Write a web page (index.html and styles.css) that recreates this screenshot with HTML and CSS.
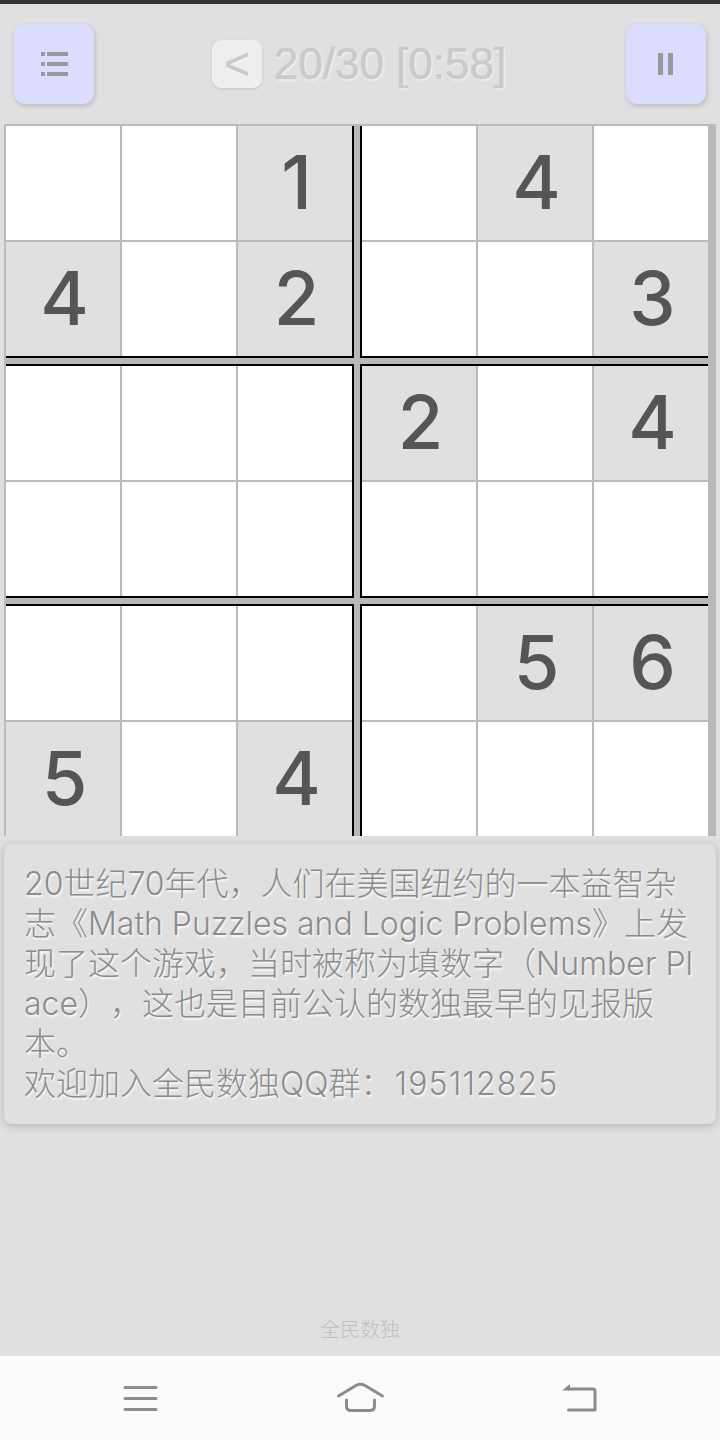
FILE: index.html
```html
<!DOCTYPE html>
<html lang="zh">
<head>
<meta charset="utf-8">
<title>全民数独</title>
<link rel="stylesheet" href="styles.css">
</head>
<body>
<div class="app">
  <header class="top">
    <button class="btn">
      <svg width="27" height="24" viewBox="0 0 27 24"><g fill="#999"><rect x="0" y="0" width="4" height="4"/><rect x="0" y="10" width="4" height="4"/><rect x="0" y="20" width="4" height="4"/><rect x="6" y="0" width="21" height="4"/><rect x="6" y="10" width="21" height="4"/><rect x="6" y="20" width="21" height="4"/></g></svg>
    </button>
    <div class="status"><span class="back">&lt;</span><span class="stat">20/30 [0:58]</span></div>
    <button class="btn">
      <svg width="15" height="22" viewBox="0 0 15 22"><g fill="#999"><rect x="0" y="0" width="5" height="22"/><rect x="10" y="0" width="5" height="22"/></g></svg>
    </button>
  </header>
  <div class="board-wrap">
    <div class="board">
      <div class="block left top-row">
        <div class="cell"></div><div class="cell"></div><div class="cell given">1</div>
        <div class="cell given">4</div><div class="cell"></div><div class="cell given">2</div>
      </div>
      <div class="block right top-row">
        <div class="cell"></div><div class="cell given">4</div><div class="cell"></div>
        <div class="cell"></div><div class="cell"></div><div class="cell given">3</div>
      </div>
      <div class="block left mid-row">
        <div class="cell"></div><div class="cell"></div><div class="cell"></div>
        <div class="cell"></div><div class="cell"></div><div class="cell"></div>
      </div>
      <div class="block right mid-row">
        <div class="cell given">2</div><div class="cell"></div><div class="cell given">4</div>
        <div class="cell"></div><div class="cell"></div><div class="cell"></div>
      </div>
      <div class="block left bottom-row">
        <div class="cell"></div><div class="cell"></div><div class="cell"></div>
        <div class="cell given">5</div><div class="cell"></div><div class="cell given">4</div>
      </div>
      <div class="block right bottom-row">
        <div class="cell"></div><div class="cell given">5</div><div class="cell given">6</div>
        <div class="cell"></div><div class="cell"></div><div class="cell"></div>
      </div>
    </div>
  </div>
  <section class="card">20世纪70年代，人们在美国纽约的一本益智杂志《Math Puzzles and Logic Problems》上发现了这个游戏，当时被称为填数字（Number Place），这也是目前公认的数独最早的见报版本。<br>欢迎加入全民数独QQ群：<span class="qq">195112825</span></section>
  <div class="spacer"></div>
  <div class="brand">全民数独</div>
  <nav class="navbar">
    <svg class="nav-icon" width="720" height="84" viewBox="0 0 720 84"><g stroke="#8c8c8c" stroke-width="3" fill="none" stroke-linecap="round" stroke-linejoin="round"><path d="M125 31.500H156M125 42.500H156M125 53.500H156"/><path d="M338.500 40 356 29.500Q360.500 27 365 29.500L382.500 40"/><path d="M346.500 44V50Q346.500 54.500 351 54.500H370Q374.500 54.500 374.500 50V44"/><path d="M569 33H593Q595 33 595 35V54H568.500"/></g><path d="M570 28V34.500H562Z" fill="#8c8c8c"/></svg>
  </nav>
</div>
</body>
</html>
```
FILE: styles.css
```css
* { box-sizing: border-box; }
html, body { margin: 0; padding: 0; }
body { width: 720px; height: 1440px; background: #e0e0e0; font-family: "Inter", "Noto Sans CJK SC", sans-serif; overflow: hidden; }
.app { height: 1440px; display: flex; flex-direction: column; border-top: 4px solid #333; }
.top { height: 120px; flex: none; display: flex; justify-content: space-between; align-items: flex-start; padding: 20px 14px 0; }
.btn { width: 80px; height: 80px; border: 0; padding: 0; border-radius: 11px; background: #dcdcfe; box-shadow: 1px 2px 5px rgba(0,0,0,.18); display: flex; align-items: center; justify-content: center; }
.status { display: flex; align-items: center; gap: 12px; height: 48px; margin-top: 16px; margin-right: 2px; color: #cacaca; font-family: "Liberation Sans", sans-serif; font-size: 44px; -webkit-text-stroke: .6px #cacaca; text-shadow: 1px 1px 3px rgba(255,255,255,.9); }
.back { width: 50px; height: 48px; background: #eee; border-radius: 9px; box-shadow: 0 1px 3px rgba(0,0,0,.12); display: flex; align-items: center; justify-content: center; font-size: 44px; }
.board-wrap { height: 712px; flex: none; overflow: hidden; padding: 0 4px; }
.board { width: 712px; display: grid; grid-template-columns: 348px 348px; gap: 6px; background: #b8b8b8; border-top: 2px solid #bbb; border-left: 2px solid #bbb; }
.block { display: grid; grid-template-columns: 116px 116px 114px; grid-template-rows: auto auto; align-content: start; border: 0 solid #000; }
.block.left { border-right-width: 2px; }
.block.right { border-left-width: 2px; }
.top-row { border-bottom-width: 2px; }
.mid-row { border-top-width: 2px; border-bottom-width: 2px; }
.bottom-row { border-top-width: 2px; }
.cell { height: 116px; background: #fff; border-right: 2px solid #bbb; border-bottom: 2px solid #bbb; padding: 0 0 3px 3px; display: flex; align-items: center; justify-content: center; font-size: 74px; font-weight: 550; color: #555; }
.cell:nth-child(3n) { border-right: 0; }
.cell:nth-child(n+4) { height: 114px; border-bottom: 0; }
.given { background: #e0e0e0; }
.card { flex: none; margin: 8px 4px 0; height: 280px; background: #e0e0e0; border-radius: 8px; box-shadow: 0 2px 8px rgba(0,0,0,.2); padding: 20px 20px; font-size: 32px; font-weight: 300; line-height: 40px; color: #8c8c8c; text-shadow: 1px 2px 2px rgba(255,255,255,.9); word-break: break-all; text-spacing-trim: space-all; }
.qq { margin-left: 2px; letter-spacing: 1.1px; }
.spacer { flex: 1; }
.brand { text-align: center; font-size: 20px; font-weight: 300; color: #c0c0c0; padding-bottom: 13px; }
.navbar { height: 84px; flex: none; background: #fbfbfb; }
.nav-icon { display: block; }
```
